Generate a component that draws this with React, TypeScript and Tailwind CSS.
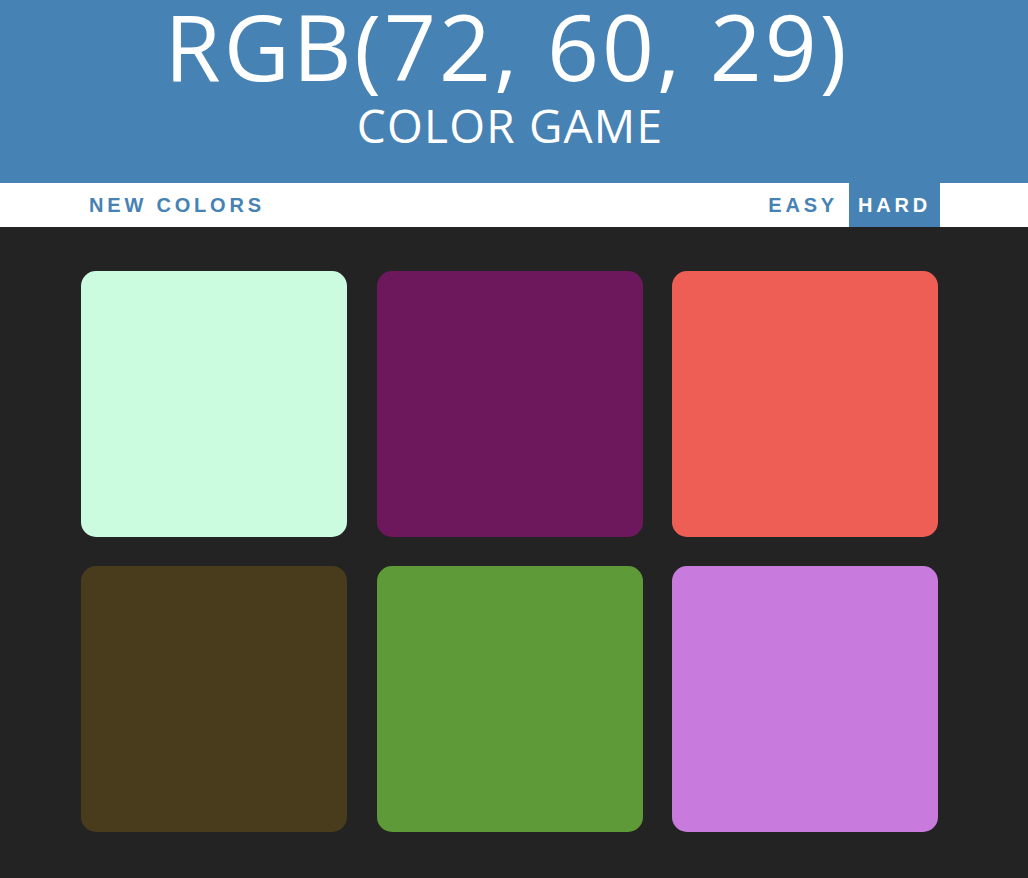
const colors = ['#cbfce0', '#6d185c', '#ef5e55', '#483c1d', '#5e9b38', '#c87bdc']

export default function App() {
  return (
    <div className="min-h-[878px] bg-[#232323]">
      {/* Header */}
      <div className="h-[183px] bg-[#4682b4] text-white text-center font-['Open_Sans',sans-serif]">
        <h1 className="pr-[14px] text-[91px] leading-[92px] font-normal tracking-[2.9px]">RGB(72, 60, 29)</h1>
        <div className="pr-[8px] text-[46px] leading-[66px] font-normal tracking-[1.2px]">COLOR GAME</div>
      </div>

      {/* Nav bar */}
      <div className="h-[44px] bg-white flex items-stretch justify-between pl-[80px] pr-[88px] font-['Liberation_Sans',Arial,sans-serif]">
        <button className="px-[9px] text-[20px] font-bold tracking-[3.8px] text-[#4682b4] uppercase">
          New Colors
        </button>
        <div className="flex items-stretch">
          <button className="px-[9px] text-[20px] font-bold tracking-[3.8px] text-[#4682b4] uppercase">
            Easy
          </button>
          <button className="ml-[2px] px-[9px] text-[20px] font-bold tracking-[3.8px] bg-[#4682b4] text-white uppercase">
            Hard
          </button>
        </div>
      </div>

      {/* Squares */}
      <div className="pt-[44px] pl-[81px]">
        <div className="w-[857px] grid grid-cols-3 gap-x-[29.5px] gap-y-[29px]">
          {colors.map((c, i) => (
            <div key={i} className="h-[266px] rounded-[15px]" style={{ backgroundColor: c }} />
          ))}
        </div>
      </div>
    </div>
  )
}
